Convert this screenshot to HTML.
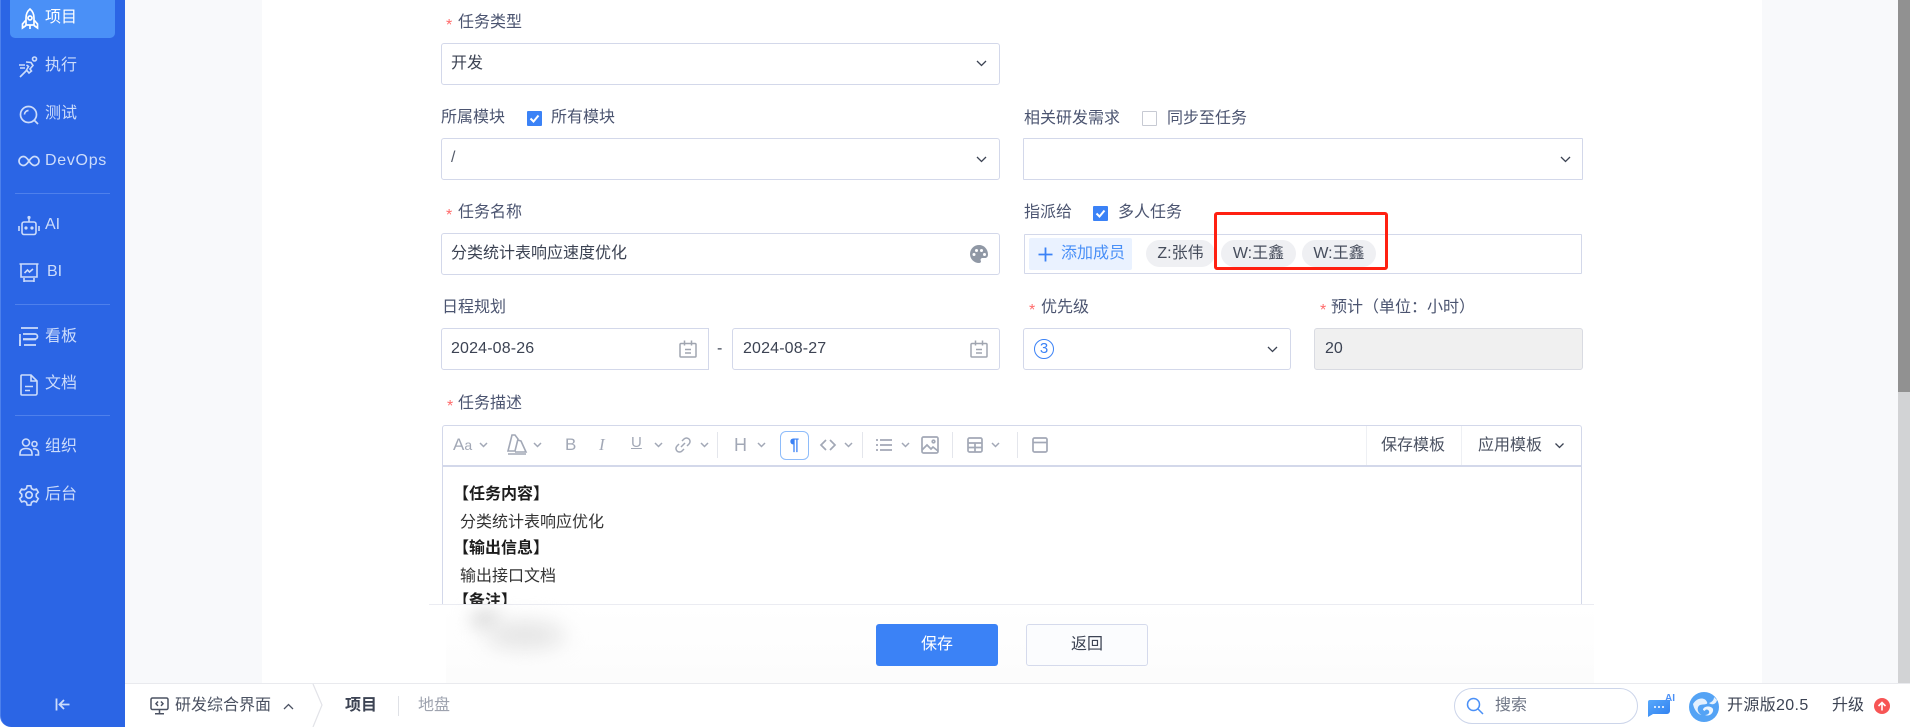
<!DOCTYPE html>
<html lang="zh"><head><meta charset="utf-8"><title>任务</title>
<style>
*{box-sizing:border-box}
html,body{margin:0;padding:0;width:1910px;height:727px;overflow:hidden;background:#fff}
body{font:16px/24px "Liberation Sans","Noto Sans CJK SC",sans-serif;color:#3c4353;position:relative}
.a,.t,.b{position:absolute}
.t{white-space:nowrap;height:24px;line-height:24px}
.b{border:1.5px solid #d3d8ea;border-radius:3px;background:#fff}
.lb{color:#4b5470}
.st{color:#ff6b6b}
.n{color:#ccdcfb}
.i{position:absolute;overflow:visible;fill:none}
.tb{stroke:#a2a8b6;stroke-width:1.6;fill:none}
.car{stroke:#a2a8b6;stroke-width:1.5;fill:none}
.sep{position:absolute;width:1px;background:#e4e6ec;top:432px;height:26px}
.chip{position:absolute;top:240px;height:27px;line-height:27px;border-radius:14px;background:#eff0f3;text-align:center;color:#464d5c;white-space:nowrap}
.cb{position:absolute;width:15px;height:15px;background:#3b82f6;border-radius:1px}
</style></head><body>

<!-- background -->
<div class="a" style="left:125px;top:0;width:1773px;height:683px;background:#f8f9fb"></div>
<div class="a" style="left:262px;top:0;width:1500px;height:683px;background:#fff"></div>
<div class="a" style="left:1898px;top:0;width:12px;height:683px;background:#d2d3d5"></div>
<div class="a" style="left:1898px;top:0;width:12px;height:392px;background:#919191"></div>

<!-- sidebar -->
<div class="a" style="left:0;top:0;width:125px;height:727px;background:#2b65e5;border-left:1px solid #4d80ec;border-bottom-left-radius:11px"></div>
<div class="a" style="left:10px;top:-6px;width:105px;height:44px;background:#4a90f7;border-radius:5px"></div>

<svg class="i" style="left:20px;top:8px" width="20" height="22" viewBox="0 0 20 22" stroke="#fff" stroke-width="1.7"><path d="M10 1C7 3.5 6 6.500 6 10v7h8v-7c0-3.500-1-6.500-4-9z"/><circle cx="10" cy="10" r="2"/><path d="M6 12l-3.500 4v4l3.500-2.500M14 12l3.500 4v4L14 17.500M10 17.500V21"/></svg>
<div class="t" style="left:45px;top:6px;color:#fff">项目</div>

<svg class="i" style="left:18px;top:56px" width="22" height="22" viewBox="0 0 22 22" stroke="#ccdcfb" stroke-width="1.6"><circle cx="16.500" cy="3" r="2"/><path d="M8 6l5 .5 2 3-3 3.500 1.500 2-2.500 2-2.500-3 2-3.500-2-1.500M9 14l-7 7M1 9h6M2 12h5"/></svg>
<div class="t n" style="left:45px;top:54px">执行</div>

<svg class="i" style="left:19px;top:105px" width="20" height="20" viewBox="0 0 20 20" stroke="#ccdcfb" stroke-width="1.700"><circle cx="9.500" cy="9.500" r="8"/><path d="M5.500 9.500a4 4 0 0 1 4-4M15 15l4 4"/></svg>
<div class="t n" style="left:45px;top:102px">测试</div>

<svg class="i" style="left:18px;top:155px" width="22" height="12" viewBox="0 0 22 12" stroke="#ccdcfb" stroke-width="1.700"><path d="M11 6C9 3 7.500 1.500 5.500 1.500a4.500 4.500 0 0 0 0 9C7.500 10.500 9 9 11 6c2-3 3.500-4.500 5.500-4.500a4.500 4.500 0 0 1 0 9C14.500 10.500 13 9 11 6z"/></svg>
<div class="t n" style="left:45px;top:149px;letter-spacing:.7px">DevOps</div>

<div class="a" style="left:15px;top:193px;width:95px;height:1px;background:#4e80ec"></div>

<svg class="i" style="left:18px;top:216px" width="22" height="20" viewBox="0 0 22 20" stroke="#ccdcfb" stroke-width="1.600"><rect x="4" y="6" width="14" height="12.500" rx="2"/><path d="M11 6V2M1 10v5M21 10v5"/><circle cx="11" cy="1.500" r=".8"/><circle cx="8" cy="12" r=".8"/><circle cx="14" cy="12" r=".8"/></svg>
<div class="t n" style="left:45px;top:213px">AI</div>

<svg class="i" style="left:19px;top:263px" width="20" height="20" viewBox="0 0 20 20" stroke="#ccdcfb" stroke-width="1.600"><path d="M0.500 1h19M2 1v13h16V1M5 15v4M15 15v4M5 18h10M5.500 10l3-3 2 2 3.500-3"/></svg>
<div class="t n" style="left:47px;top:260px">BI</div>

<div class="a" style="left:15px;top:304px;width:95px;height:1px;background:#4e80ec"></div>

<svg class="i" style="left:19px;top:327px" width="20" height="20" viewBox="0 0 20 20" stroke="#ccdcfb" stroke-width="1.700"><path d="M2 1h17M1 7v12M4 7h12a2 2 0 0 1 0 5H4M5 18h12"/><path d="M4 12.500h13"/><path d="M1 13v6" /></svg>
<div class="t n" style="left:45px;top:325px">看板</div>

<svg class="i" style="left:20px;top:374px" width="18" height="22" viewBox="0 0 18 22" stroke="#ccdcfb" stroke-width="1.600"><path d="M2 1h9l6 6v12.500a1.500 1.500 0 0 1-1.500 1.500h-13.500a1 1 0 0 1-1-1V2a1 1 0 0 1 1-1zM11 1v6h6M5 12.500h8M5 16.500h5"/></svg>
<div class="t n" style="left:45px;top:372px">文档</div>

<div class="a" style="left:15px;top:415px;width:95px;height:1px;background:#4e80ec"></div>

<svg class="i" style="left:19px;top:438px" width="20" height="18" viewBox="0 0 20 18" stroke="#ccdcfb" stroke-width="1.600"><circle cx="7" cy="4.500" r="3.500"/><circle cx="15.500" cy="6" r="2.500"/><path d="M1 17v-1.500C1 12 3.500 10.500 7 10.500s6 1.500 6 5V17zM14 11c3-.5 5.500 1 5.500 3.500V17H16"/></svg>
<div class="t n" style="left:45px;top:435px">组织</div>

<svg class="i" style="left:18px;top:484px" width="22" height="22" viewBox="0 0 24 24" stroke="#ccdcfb" stroke-width="1.800"><circle cx="12" cy="12" r="3.500"/><path d="M10 2h4l.8 3 2.300 1.300 3-.8 2 3.500-2.200 2.200v2.600l2.200 2.200-2 3.500-3-.8-2.300 1.300-.8 3h-4l-.8-3-2.300-1.300-3 .8-2-3.500 2.200-2.200v-2.600L1.900 9l2-3.500 3 .8L9.200 5z"/></svg>
<div class="t n" style="left:45px;top:483px">后台</div>

<svg class="i" style="left:55px;top:698px" width="15" height="13" viewBox="0 0 15 13" stroke="#ccdcfb" stroke-width="1.800"><path d="M1.500 0.500v12M14.500 6.500H5M9 2L4.500 6.500 9 11"/></svg>

<!-- row 1 -->
<div class="t st" style="left:446px;top:14px">*</div><div class="t lb" style="left:458px;top:11px">任务类型</div>
<div class="b" style="left:441px;top:43px;width:559px;height:42px"></div>
<div class="t" style="left:451px;top:52px">开发</div>
<svg class="i" style="left:976px;top:60px" width="11" height="7" viewBox="0 0 11 7" stroke="#3c4353" stroke-width="1.300"><path d="M1 1l4.500 4.500L10 1"/></svg>

<!-- row 2 -->
<div class="t lb" style="left:441px;top:106px">所属模块</div>
<div class="cb" style="left:527px;top:111px"></div>
<svg class="i" style="left:527px;top:111px" width="15" height="15" viewBox="0 0 15 15" stroke="#fff" stroke-width="2"><path d="M3.500 7.500l3 3 5-6"/></svg>
<div class="t lb" style="left:551px;top:106px">所有模块</div>
<div class="b" style="left:441px;top:138px;width:559px;height:42px"></div>
<div class="t" style="left:451px;top:146px;color:#555c6b">/</div>
<svg class="i" style="left:976px;top:156px" width="11" height="7" viewBox="0 0 11 7" stroke="#3c4353" stroke-width="1.300"><path d="M1 1l4.500 4.500L10 1"/></svg>

<div class="t lb" style="left:1024px;top:107px">相关研发需求</div>
<div class="a" style="left:1142px;top:111px;width:15px;height:15px;border:1.500px solid #c7cad3;border-radius:1px;background:#fff"></div>
<div class="t lb" style="left:1167px;top:107px">同步至任务</div>
<div class="b" style="left:1023px;top:138px;width:560px;height:42px;border-radius:1px"></div>
<svg class="i" style="left:1560px;top:156px" width="11" height="7" viewBox="0 0 11 7" stroke="#3c4353" stroke-width="1.300"><path d="M1 1l4.500 4.500L10 1"/></svg>

<!-- row 3 -->
<div class="t st" style="left:446px;top:204px">*</div><div class="t lb" style="left:458px;top:201px">任务名称</div>
<div class="b" style="left:441px;top:233px;width:559px;height:42px"></div>
<div class="t" style="left:451px;top:242px">分类统计表响应速度优化</div>
<svg class="i" style="left:970px;top:245px;fill:#9098a5" width="18" height="18" viewBox="0 0 18 18"><path fill-rule="evenodd" d="M9 0a9 9 0 0 0 0 18c1.700 0 2.300-1.200 1.800-2.200-.6-1.200 0-2.800 1.700-2.800H15c1.800 0 3-1.300 3-3.500C18 4 14 0 9 0zM4 8a1.500 1.500 0 1 1 0 3 1.500 1.500 0 0 1 0-3zm2.500-4a1.500 1.500 0 1 1 0 3 1.500 1.500 0 0 1 0-3zm5 0a1.500 1.500 0 1 1 0 3 1.500 1.500 0 0 1 0-3zm3 4a1.500 1.500 0 1 1 0 3 1.500 1.500 0 0 1 0-3z"/></svg>

<div class="t lb" style="left:1024px;top:201px">指派给</div>
<div class="cb" style="left:1093px;top:206px"></div>
<svg class="i" style="left:1093px;top:206px" width="15" height="15" viewBox="0 0 15 15" stroke="#fff" stroke-width="2"><path d="M3.500 7.500l3 3 5-6"/></svg>
<div class="t lb" style="left:1118px;top:201px">多人任务</div>
<div class="b" style="left:1024px;top:234px;width:558px;height:40px;border-radius:1px"></div>
<div class="a" style="left:1029px;top:238px;width:103px;height:32px;background:#eaf2ff;border-radius:2px"></div>
<svg class="i" style="left:1038px;top:247px" width="15" height="15" viewBox="0 0 15 15" stroke="#3b82f6" stroke-width="1.800"><path d="M7.500 0.500v14M0.500 7.500h14"/></svg>
<div class="t" style="left:1061px;top:242px;color:#4a90f7">添加成员</div>
<div class="chip" style="left:1146px;width:69px">Z:张伟</div>
<div class="chip" style="left:1221px;width:75px">W:王鑫</div>
<div class="chip" style="left:1302px;width:74px">W:王鑫</div>
<div class="a" style="left:1214px;top:212px;width:174px;height:58px;border:3px solid #ff2011;border-radius:3px"></div>

<!-- row 4 -->
<div class="t lb" style="left:442px;top:296px">日程规划</div>
<div class="b" style="left:441px;top:328px;width:268px;height:42px;border-radius:3px 0 0 3px"></div>
<div class="t" style="left:451px;top:337px;letter-spacing:.15px">2024-08-26</div>
<div class="t" style="left:717px;top:337px">-</div>
<div class="b" style="left:732px;top:328px;width:268px;height:42px"></div>
<div class="t" style="left:743px;top:337px;letter-spacing:.15px">2024-08-27</div>
<svg class="i" style="left:679px;top:340px" width="18" height="18" viewBox="0 0 18 18" stroke="#a0a5b0" stroke-width="1.500"><path d="M2 3.500h14a1 1 0 0 1 1 1V16a1 1 0 0 1-1 1H2a1 1 0 0 1-1-1V4.500a1 1 0 0 1 1-1zM5.500 0.500v5M12.500 0.500v5M6 9.500h6M6 13h6"/></svg>
<svg class="i" style="left:970px;top:340px" width="18" height="18" viewBox="0 0 18 18" stroke="#a0a5b0" stroke-width="1.500"><path d="M2 3.500h14a1 1 0 0 1 1 1V16a1 1 0 0 1-1 1H2a1 1 0 0 1-1-1V4.500a1 1 0 0 1 1-1zM5.500 0.500v5M12.500 0.500v5M6 9.500h6M6 13h6"/></svg>

<div class="t st" style="left:1029px;top:299px">*</div><div class="t lb" style="left:1041px;top:296px">优先级</div>
<div class="b" style="left:1023px;top:328px;width:268px;height:42px"></div>
<div class="a" style="left:1034px;top:339px;width:20px;height:20px;border:1.500px solid #3b82f6;border-radius:50%;color:#3b82f6;text-align:center;line-height:17px;font-size:15px">3</div>
<svg class="i" style="left:1267px;top:346px" width="11" height="7" viewBox="0 0 11 7" stroke="#3c4353" stroke-width="1.300"><path d="M1 1l4.500 4.500L10 1"/></svg>

<div class="t st" style="left:1320px;top:299px">*</div><div class="t lb" style="left:1331px;top:296px">预计（单位：小时）</div>
<div class="b" style="left:1314px;top:328px;width:269px;height:42px;background:#f0f0f0;border-color:#d9dbe2"></div>
<div class="t" style="left:1325px;top:337px">20</div>

<!-- editor -->
<div class="t st" style="left:447px;top:395px">*</div><div class="t lb" style="left:458px;top:392px">任务描述</div>
<div class="a" style="left:442px;top:425px;width:1140px;height:180px;border:1.500px solid #d3d8ea;border-bottom:0;border-radius:3px 3px 0 0;background:#fff"></div>
<div class="a" style="left:443px;top:465px;width:1138px;height:1.500px;background:#d3d8ea"></div>

<div class="t" style="left:453px;top:433px;color:#a2a8b6;font-size:17px">A<span style="font-size:14px">a</span></div>
<svg class="i" style="left:507px;top:434px" width="20" height="22" viewBox="0 0 20 22" stroke="#a2a8b6" stroke-width="1.600"><path d="M5 1h3l3 4-3 12H1zM11 6l3 1 5 11H8M1 20h18"/></svg>
<div class="t" style="left:565px;top:433px;color:#a2a8b6;font-size:17px">B</div>
<div class="t" style="left:599px;top:433px;color:#a2a8b6;font-size:17px;font-style:italic;font-family:'Liberation Serif',serif">I</div>
<div class="t" style="left:631px;top:431px;color:#a2a8b6;font-size:15px;text-decoration:underline">U</div>
<svg class="i" style="left:675px;top:437px" width="16" height="16" viewBox="0 0 16 16" stroke="#a2a8b6" stroke-width="1.500"><path d="M7 4l2-2a3 3 0 0 1 5 5l-2 2M9 12l-2 2a3 3 0 0 1-5-5l2-2M6 10l4-4"/></svg>
<div class="t" style="left:734px;top:433px;color:#a2a8b6;font-size:18px">H</div>
<div class="a" style="left:780px;top:431px;width:29px;height:29px;border:1.500px solid #8ebcfa;border-radius:6px;text-align:center;color:#3b82f6;line-height:26px;font-size:17px;font-weight:bold">¶</div>
<svg class="i" style="left:820px;top:439px" width="16" height="12" viewBox="0 0 16 12" stroke="#a2a8b6" stroke-width="1.700"><path d="M6 1L1 6l5 5M10 1l5 5-5 5"/></svg>
<svg class="i" style="left:876px;top:439px" width="16" height="12" viewBox="0 0 16 12" stroke="#a2a8b6" stroke-width="1.700"><path d="M4 1h12M4 6h12M4 11h12M0 1h2M0 6h2M0 11h2"/></svg>
<svg class="i" style="left:921px;top:436px" width="18" height="18" viewBox="0 0 18 18" stroke="#a2a8b6" stroke-width="1.700"><rect x="1" y="1" width="16" height="16" rx="1.500"/><circle cx="12.500" cy="5.500" r="1.300"/><path d="M1 14l5-5 4 4 2-2 5 4"/></svg>
<svg class="i" style="left:967px;top:437px" width="16" height="16" viewBox="0 0 16 16" stroke="#a2a8b6" stroke-width="1.700"><rect x="1" y="1" width="14" height="14" rx="1.500"/><path d="M1 6h14M1 10.500h14M8 6v9"/></svg>
<svg class="i" style="left:1032px;top:437px" width="16" height="16" viewBox="0 0 16 16" stroke="#a2a8b6" stroke-width="1.700"><rect x="1" y="1" width="14" height="14" rx="1.500"/><path d="M1 5.500h14"/></svg>

<svg class="i" style="left:0;top:0" width="1100" height="460">
<path class="car" d="M480 443l3.500 3.500L487 443M534 443l3.500 3.500L541 443M655 443l3.500 3.500L662 443M701 443l3.500 3.500L708 443M758 443l3.500 3.500L765 443M845 443l3.500 3.500L852 443M902 443l3.500 3.500L909 443M992 443l3.500 3.500L999 443"/>
</svg>
<div class="sep" style="left:717px"></div><div class="sep" style="left:862px"></div><div class="sep" style="left:952px"></div><div class="sep" style="left:1017px"></div>
<div class="a" style="left:1366px;top:426px;width:1px;height:39px;background:#eef0f4"></div>
<div class="a" style="left:1461px;top:426px;width:1px;height:39px;background:#eef0f4"></div>
<div class="t" style="left:1381px;top:434px;color:#4b5262">保存模板</div>
<div class="t" style="left:1478px;top:434px;color:#4b5262">应用模板</div>
<svg class="i" style="left:1555px;top:443px" width="9" height="6" viewBox="0 0 9 6" stroke="#3c4353" stroke-width="1.300"><path d="M.5.500l4 4 4-4"/></svg>

<div class="t" style="left:453px;top:483px;color:#1c1c1c;font-weight:bold">【任务内容】</div>
<div class="t" style="left:460px;top:511px;color:#333">分类统计表响应优化</div>
<div class="t" style="left:453px;top:537px;color:#1c1c1c;font-weight:bold">【输出信息】</div>
<div class="t" style="left:460px;top:565px;color:#333">输出接口文档</div>
<div class="t" style="left:453px;top:590px;color:#1c1c1c;font-weight:bold">【备注】</div>

<!-- action bar -->
<div class="a" style="left:429px;top:604px;width:1165px;height:79px;background:#fff;border-top:1.500px solid #ebecf2"></div>
<div class="a" style="left:446px;top:606px;width:1148px;height:77px;background:linear-gradient(#fff,#fcfcfc)"></div>
<div class="a" style="left:470px;top:612px;width:30px;height:14px;background:#d0d0d0;filter:blur(9px);border-radius:50%"></div>
<div class="a" style="left:485px;top:622px;width:80px;height:26px;background:#e2e2e2;filter:blur(11px);border-radius:50%"></div>
<div class="a" style="left:876px;top:624px;width:122px;height:42px;background:#3b82f6;border-radius:3px;color:#fff;text-align:center;line-height:42px">保存</div>
<div class="a" style="left:1026px;top:624px;width:122px;height:42px;background:#fbfcfe;border:1.500px solid #d5daec;border-radius:3px;text-align:center;line-height:39px;color:#3c4353">返回</div>

<!-- footer -->
<div class="a" style="left:125px;top:683px;width:1785px;height:44px;background:#fff;border-top:1.500px solid #e9eaee;border-bottom-right-radius:11px"></div>
<svg class="i" style="left:150px;top:697px" width="19" height="18" viewBox="0 0 19 18" stroke="#4b5262" stroke-width="1.500"><rect x="1" y="1" width="17" height="11.500" rx="1.500"/><path d="M9.500 12.500V16M5 16.700h9M8 4.500L6 6.700l2 2.200M11 4.500l2 2.200-2 2.200" /></svg>
<div class="t" style="left:175px;top:694px;color:#4b5262">研发综合界面</div>
<svg class="i" style="left:283px;top:703px" width="11" height="7" viewBox="0 0 11 7" stroke="#4b5262" stroke-width="1.300"><path d="M1 6l4.500-4.500L10 6"/></svg>
<svg class="i" style="left:312px;top:684px" width="12" height="43" viewBox="0 0 12 43" stroke="#e2e3e8" stroke-width="1.200"><path d="M1 0l9 21L1 43"/></svg>
<div class="t" style="left:345px;top:694px;font-weight:bold;color:#3c4353">项目</div>
<div class="a" style="left:398px;top:696px;width:1px;height:20px;background:#dfe1e6"></div>
<div class="t" style="left:418px;top:694px;color:#9ea3af">地盘</div>

<div class="a" style="left:1454px;top:688px;width:184px;height:36px;border:1.500px solid #ccd5ea;border-radius:18px;background:#fff"></div>
<svg class="i" style="left:1466px;top:697px" width="18" height="18" viewBox="0 0 18 18" stroke="#4a90f7" stroke-width="1.500"><circle cx="7.500" cy="7.500" r="6"/><path d="M12 12l5 5"/></svg>
<div class="t" style="left:1495px;top:694px;color:#6f7686">搜索</div>
<svg class="i" style="left:1647px;top:699px" width="24" height="18" viewBox="0 0 24 18"><defs><linearGradient id="g" x1="0" y1="0" x2="1" y2="1"><stop offset="0" stop-color="#57a8fb"/><stop offset="1" stop-color="#2f7ff0"/></linearGradient></defs><path fill="url(#g)" d="M3 1h20v11a3 3 0 0 1-3 3H6l-5 3V3a2 2 0 0 1 2-2z"/><circle cx="8" cy="8" r="1" fill="#fff"/><circle cx="12" cy="8" r="1" fill="#fff"/><circle cx="16" cy="8" r="1" fill="#fff"/></svg>
<div class="t" style="left:1665px;top:689px;font-size:10px;font-weight:bold;color:#4a90f7;line-height:20px">AI</div>
<svg class="i" style="left:1689px;top:692px" width="30" height="30" viewBox="0 0 30 30"><circle cx="15" cy="15" r="15" fill="#54a3f5"/><path d="M4 12C8 5 16 5 18 10c1.500 3-4 2-7 3-3 1.500-3.500 7 1.500 10C8 22 5 17 4 12z" fill="#fff" opacity=".85"/><path d="M28 8c-1 5-6 5-8 3 3-1 5-3 5-6z" fill="#fff" opacity=".85"/><path d="M14 18c0-4 8-5 10-1 1 4-4 8-8 6 3 0 5-2 4-4-1-2-4-2-4 0z" fill="#fff" opacity=".9"/></svg>
<div class="t" style="left:1727px;top:694px;color:#3c4353;letter-spacing:.35px">开源版20.5</div>
<div class="t" style="left:1832px;top:694px;color:#3c4353">升级</div>
<div class="a" style="left:1874px;top:698px;width:16px;height:16px;background:#f75555;border-radius:50%"></div>
<svg class="i" style="left:1877px;top:701px" width="10" height="10" viewBox="0 0 10 10" stroke="#fff" stroke-width="1.600"><path d="M5 9.500V1.500M1.500 5L5 1.500 8.500 5"/></svg>
</body></html>
